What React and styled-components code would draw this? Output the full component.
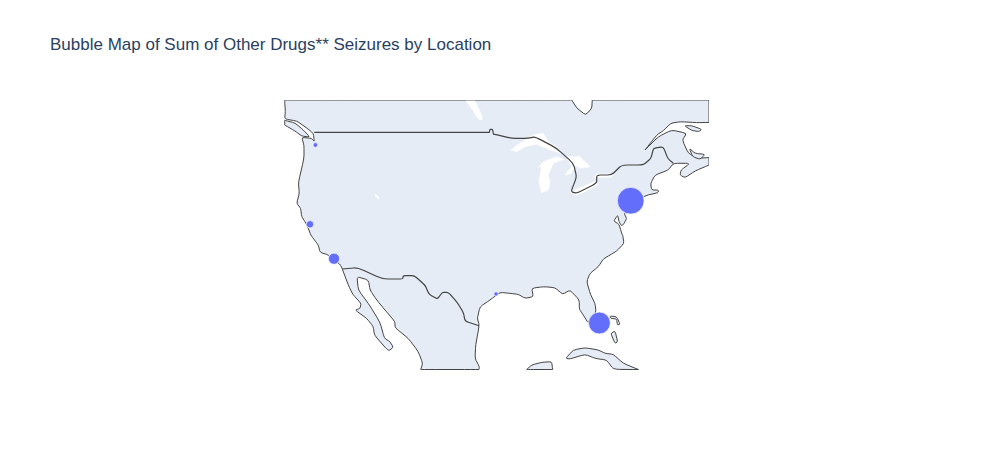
import React from "react";
import styled, { createGlobalStyle } from "styled-components";

const Global = createGlobalStyle`
  html, body { margin: 0; padding: 0; background: #fff; }
`;

const Page = styled.div`
  width: 993px;
  height: 450px;
  display: flex;
  flex-direction: column;
  background: #fff;
  overflow: hidden;
`;

const Title = styled.h1`
  margin: 35px 0 0 50px;
  font: 400 17px/20px "Liberation Sans", Arial, sans-serif;
  color: #2a3f5f;
`;

const MapRow = styled.div`
  display: flex;
  justify-content: center;
  margin-top: 45px;
`;

const MapSvg = styled.svg`
  display: block;
  width: 425px;
  height: 271px;
`;

const Land = styled.path`
  fill: #e5ecf6;
  stroke: #444;
  stroke-width: 1;
  stroke-linejoin: round;
`;

const Lake = styled.path`
  fill: #fff;
  stroke: #fff;
  stroke-width: 0.5;
  stroke-linejoin: round;
`;

const Border = styled.path`
  fill: none;
  stroke: #444;
  stroke-width: 1.2;
  stroke-linejoin: round;
`;

const Bubble = styled.circle`
  fill: #636efa;
  stroke: #fff;
  stroke-width: 0.7;
`;

// coordinates below are read from the reference crops: each helper maps a crop's 3x pixels to page pixels
const crop = (ox, oy) => (pts) => pts.map(([x, y]) => [ox + x / 3, oy + y / 3]);
const Z1 = crop(280, 95);
const Z2 = crop(495, 95);
const Z3 = crop(280, 235);
const Z4 = crop(470, 235);
const Z6 = crop(600, 110);
const Z7 = crop(500, 125);

// a repeated point stays a sharp corner; the others get a small rounding
const corner = (x, y) => [[x, y], [x, y]];

const fmt = ([x, y]) => `${x.toFixed(1)} ${y.toFixed(1)}`;
const toward = (a, b, t) => [a[0] + (b[0] - a[0]) * t, a[1] + (b[1] - a[1]) * t];

const toPath = (pts, close = true) => {
  const n = pts.length;
  let d = "";
  pts.forEach((p, i) => {
    const prev = pts[(i - 1 + n) % n];
    const next = pts[(i + 1) % n];
    if (!close && (i === 0 || i === n - 1)) {
      d += `${i === 0 ? "M" : "L"}${fmt(p)}`;
      return;
    }
    const a = toward(p, prev, 0.25);
    const b = toward(p, next, 0.25);
    d += `${d ? "L" : "M"}${fmt(a)}Q${fmt(p)} ${fmt(b)}`;
  });
  return d + (close ? "Z" : "");
};

const toPolygon = (pts) => "M" + pts.map(fmt).join("L") + "Z";

const mainland = [
  ...corner(285, 100),
  ...corner(571.7, 100), [576.7, 108], [585.7, 115], [591.7, 108.3], ...corner(592.3, 100),
  ...corner(709, 100), ...corner(709, 122.5),
  ...Z6([[290, 38], [240, 35], [212, 40], [190, 62], [170, 75]]), ...corner(645, 150),
  ...Z2([[490, 125], [530, 105], [575, 115], [562, 135], [580, 175], [610, 190]]), ...corner(709, 157.5),
  ...corner(709, 165),
  ...Z2([[600, 228], [570, 248], [555, 240], [558, 225], [585, 205], [535, 205],
    [520, 225], [480, 240], [467, 265], [470, 285], [490, 285], [490, 293], [450, 302],
    [400, 340], [388, 357], [395, 370], [388, 384], [380, 393], [372, 380], [368, 360], [356, 378],
    [372, 388], [378, 408], [382, 420]]),
  ...Z4([[458, 0], [462, 25], [440, 48], [420, 60], [400, 72], [385, 95], [360, 115], [350, 140],
    [362, 180], [375, 205], [378, 232], [360, 250], [355, 265], [340, 240], [328, 222], [328, 195],
    [300, 165], [278, 178], [255, 158], [220, 155], [185, 160], [190, 185], [165, 190], [145, 178],
    [120, 175], [90, 172], [60, 195], [30, 215], [22, 250], [28, 270]]),
  ...Z3([[587, 330], [585, 370], [598, 395]]), ...corner(479, 369.5), ...corner(420.7, 369.5),
  ...Z3([[428, 385], [415, 350], [385, 310],
    [345, 278], [345, 260], [315, 225], [290, 195], [270, 165], [265, 135], [231, 125], [235, 165],
    [265, 205], [300, 262], [313, 310], [330, 320], [340, 337], [325, 348], [283, 300], [280, 275],
    [260, 250], [225, 225], [240, 220], [243, 205], [218, 178], [205, 150], [187, 102], [180, 88],
    [145, 60], [120, 52], [115, 30], [92, 0]]),
  ...Z1([[85, 400], [75, 380], [65, 365], [62, 340], [50, 325], [58, 295], [55, 262], [72, 190],
    [72, 150], [65, 127], [95, 130], [103, 140], [100, 115], [75, 95], [50, 78], [14, 72], [16, 50], [14, 18]]),
];

const islands = [
  [...corner(284.7, 120.3), ...Z1([[45, 84], [70, 105], [90, 126], [65, 123], [45, 108]]), ...corner(284.7, 125)],
  Z2([[568, 92], [590, 92], [620, 103], [612, 110], [590, 106]]),
  Z6([[268, 115], [285, 130], [315, 133], [300, 148], [278, 140]]),
  [...Z4([[287, 370], [310, 345], [345, 338], [385, 345], [405, 355], [430, 358], [460, 385]]), ...corner(638.5, 369.5),
    ...Z4([[430, 403], [410, 375], [375, 370], [345, 358], [300, 372]])],
  [...corner(526.7, 369.5), ...Z4([[185, 390], [215, 382], [245, 380]]), ...corner(552.7, 369.5)],
  Z4([[422, 295], [435, 288], [443, 320], [435, 325]]),
  Z4([[420, 243], [440, 245], [450, 268], [442, 270], [440, 252], [422, 250]]),
];

const lakes = [
  Z1([[558, 18], [585, 18], [605, 60], [607, 75], [595, 72], [578, 45]]),
  Z1([[285, 298], [296, 305], [296, 312], [285, 303]]),
  Z7([[32, 75], [60, 55], [100, 30], [130, 25], [145, 50], [170, 65], [185, 85], [150, 75], [110, 58],
    [75, 65], [50, 80]]),
  Z7([[115, 128], [130, 110], [170, 95], [192, 103], [160, 115], [145, 150], [150, 170], [145, 195], [125, 203],
    [117, 170], [125, 122]]),
  Z7([[198, 95], [240, 95], [270, 125], [240, 130], [225, 120], [215, 145], [195, 150], [215, 125], [205, 105]]),
  Z2([[225, 293], [245, 300], [275, 288], [310, 268], [300, 260], [245, 282]]),
  Z2([[298, 247], [350, 247], [355, 238], [305, 236]]),
];

const border = [
  ...corner(314.3, 132.4), ...corner(489.3, 132.4),
  ...Z1([[630, 103], [638, 103], [640, 118], [645, 118]]),
  ...Z2([[50, 130], [100, 130], [120, 125], [185, 160], [235, 205], [245, 245], [228, 290], [245, 295],
    [305, 265], [305, 240], [350, 240], [380, 210], [445, 210], [468, 190], [475, 160], [505, 155], [518, 190], [535, 205]]),
];

const mexicoBorder = Z3([[187, 102], [233, 98], [308, 132], [368, 132], [370, 122], [403, 122], [435, 150],
  [447, 178], [472, 192], [487, 172], [505, 172], [530, 200], [550, 232], [555, 258], [597, 272]]);

const bubbles = [
  { cx: 630.7, cy: 200.7, r: 13.4 },
  { cx: 599.4, cy: 323, r: 10.9 },
  { cx: 334, cy: 258.7, r: 5.6 },
  { cx: 310, cy: 224.3, r: 3.7 },
  { cx: 315.4, cy: 145, r: 2.4 },
  { cx: 496, cy: 294, r: 2.2 },
];

export default function App() {
  return (
    <Page>
      <Global />
      <Title>Bubble Map of Sum of Other Drugs** Seizures by Location</Title>
      <MapRow>
        <MapSvg viewBox="284 100 425 271">
          <Land d={toPath(mainland)} />
          {islands.map((pts, i) => <Land key={i} d={toPath(pts)} />)}
          {lakes.map((pts, i) => <Lake key={i} d={toPolygon(pts)} />)}
          <Border d={toPath(border, false)} />
          <Border d={toPath(mexicoBorder, false)} />
          {bubbles.map((b, i) => <Bubble key={i} {...b} />)}
        </MapSvg>
      </MapRow>
    </Page>
  );
}
